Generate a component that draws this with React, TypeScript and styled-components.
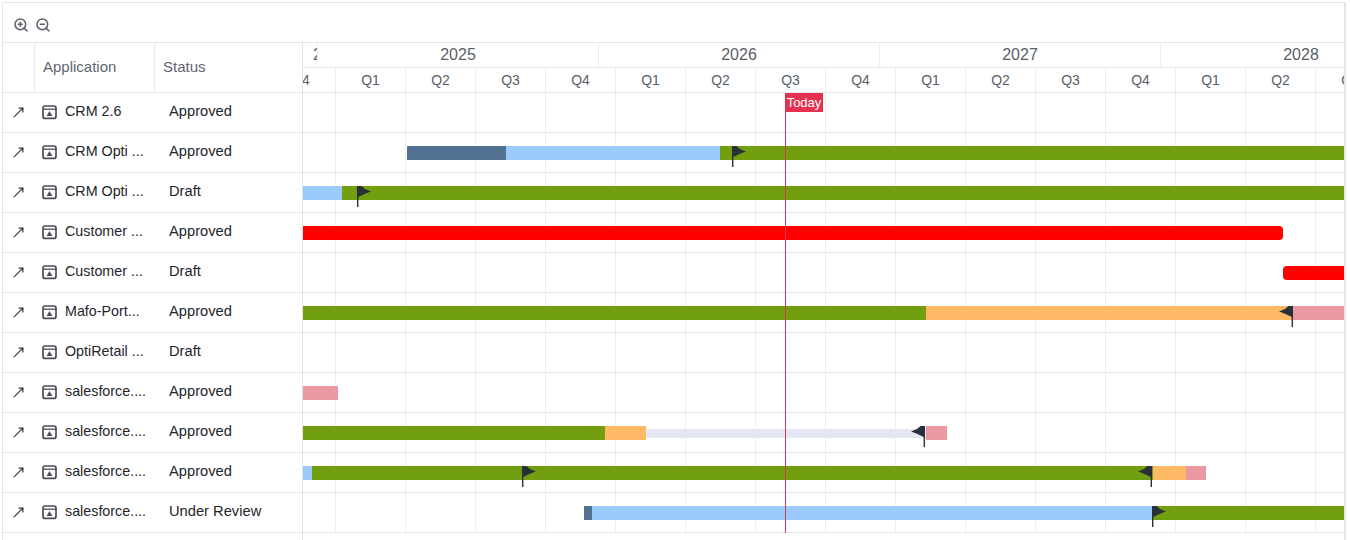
import styled, { createGlobalStyle } from 'styled-components';
import { MoveUpRight, ZoomIn, ZoomOut } from 'lucide-react';

const CHART_LEFT = 303;

const GlobalStyle = createGlobalStyle`
  html, body {
    margin: 0;
    height: 540px;
    overflow: hidden;
    background: #fff;
  }
  * {
    box-sizing: border-box;
  }
`;

const Frame = styled.div`
  width: 1344px;
  height: 538px;
  margin: 2px 0 0 2px;
  border: 1px solid #e3e5e8;
  border-bottom: none;
  border-right-width: 2px;
  font-family: 'Liberation Sans', Arial, sans-serif;
  font-size: 14.7px;
  color: #22262c;
  display: flex;
  flex-direction: column;
`;
const Toolbar = styled.div`
  height: 40px;
  flex: none;
  display: flex;
  align-items: center;
  gap: 6px;
  padding: 4px 0 0 10px;
  border-bottom: 1px solid #e3e5e8;
  color: #5b626b;
`;
const Main = styled.div`
  flex: 1;
  display: flex;
  min-height: 0;
`;
const LeftPane = styled.div`
  width: 300px;
  flex: none;
  border-right: 1px solid #e0e2e5;
`;
const LeftHeader = styled.div`
  height: 50px;
  display: grid;
  grid-template-columns: 31px 120px 1fr;
  border-bottom: 1px solid #e3e5e8;
  color: #5f666f;
  font-size: 15px;
`;
const HeaderCell = styled.div`
  display: flex;
  align-items: center;
  padding: 0 0 3px 8px;
  &:not(:first-child) {
    border-left: 1px solid #e9ebed;
  }
`;
const LeftRow = styled.div`
  height: 40px;
  display: grid;
  grid-template-columns: 31px 120px 1fr;
  align-items: center;
  border-bottom: 1px solid #e3e5e8;
`;
const OpenCell = styled.div`
  display: flex;
  padding-left: 8px;
  color: #333a42;
`;
const NameCell = styled.div`
  display: flex;
  align-items: center;
  gap: 8px;
  padding-left: 8px;
  white-space: nowrap;
  font-size: 14.3px;
`;
const RowText = styled.span`
  position: relative;
  top: -2px;
`;
const StatusCell = styled(RowText)`
  padding-left: 15px;
`;
const Chart = styled.div`
  flex: 1;
  min-width: 0;
  position: relative;
  overflow: hidden;
`;
const HeaderBand = styled.div<{ $shift: number }>`
  height: 25px;
  display: flex;
  margin-left: ${(p) => p.$shift}px;
  border-bottom: 1px solid #e3e5e8;
  color: #5a6068;
`;
const YearCell = styled.div<{ $narrow?: boolean }>`
  flex: none;
  width: ${(p) => (p.$narrow ? 15 : 281)}px;
  overflow: hidden;
  display: flex;
  align-items: center;
  justify-content: ${(p) => (p.$narrow ? 'flex-start' : 'center')};
  padding-left: ${(p) => (p.$narrow ? 10 : 0)}px;
  font-size: 16px;
  border-right: 1px solid #eceef0;
`;
const QuarterCell = styled.div`
  flex: none;
  width: 70px;
  display: flex;
  align-items: center;
  justify-content: center;
  font-size: 14px;
  border-right: 1px solid #eceef0;
`;
const Rows = styled.div`
  position: relative;
  background: repeating-linear-gradient(
    90deg,
    transparent 0 32px,
    #eeeff0 32px 33px,
    transparent 33px 70px
  );
`;
const ChartRow = styled.div`
  height: 40px;
  position: relative;
  border-bottom: 1px solid #e3e5e8;
`;
const Bar = styled.div<{ $from: number; $to: number; $color: string; $thin?: boolean; $round?: 'left' | 'right' }>`
  position: absolute;
  left: ${(p) => p.$from - CHART_LEFT}px;
  width: ${(p) => p.$to - p.$from}px;
  top: ${(p) => (p.$thin ? 16 : 13)}px;
  height: ${(p) => (p.$thin ? 9 : 14)}px;
  background: ${(p) => p.$color};
  border-radius: ${(p) => (p.$round === 'left' ? '4px 0 0 4px' : p.$round === 'right' ? '0 4px 4px 0' : '0')};
`;
const FlagMark = styled.svg<{ $pole: number; $back?: boolean }>`
  position: absolute;
  top: 13px;
  left: ${(p) => p.$pole - CHART_LEFT - (p.$back ? 14 : 0)}px;
  transform: ${(p) => (p.$back ? 'scaleX(-1)' : 'none')};
`;
const TodayLine = styled.div`
  position: absolute;
  top: 50px;
  left: ${785 - CHART_LEFT}px;
  width: 1px;
  height: 440px;
  background: #cf3a55;
`;
const TodayTag = styled.div`
  position: absolute;
  top: 50px;
  left: ${785 - CHART_LEFT}px;
  width: 38px;
  height: 19px;
  background: #e5304f;
  color: #fff;
  font-size: 13px;
  display: flex;
  align-items: center;
  justify-content: center;
`;

const AppIcon = () => (
  <svg width="15" height="15" viewBox="0 0 15 15" fill="none">
    <rect x="1" y="1" width="13" height="12.4" rx="2" stroke="#4a4f57" strokeWidth="1.7" />
    <path d="M1 4.2h13" stroke="#4a4f57" strokeWidth="1.3" />
    <path d="M4.6 11 7.5 6l2.9 5z" fill="#4a4f57" />
  </svg>
);

const Flag = ({ pole, back }: { pole: number; back?: boolean }) => (
  <FlagMark $pole={pole} $back={back} width="15" height="21" viewBox="0 0 15 21">
    <path d="M0 0h1.4v21H0z" fill="#2b3038" />
    <path d="M1 0h3.5L8 3l6 2.6-6 2.2-3.5 1.8L1 11z" fill="#2b3038" />
  </FlagMark>
);

type Segment = { from: number; to: number; color: string; thin?: boolean; round?: 'left' | 'right' };
type Row = { name: string; status: string; bars: Segment[]; flags: { pole: number; back?: boolean }[] };

const DARK = '#527291';
const BLUE = '#9bcbfd';
const GREEN = '#729f0f';
const ORANGE = '#ffb866';
const PINK = '#ea98a2';
const RED = '#ff0000';
const LILAC = '#e4e6f3';
const END = 1345;

const rows: Row[] = [
  { name: 'CRM 2.6', status: 'Approved', bars: [], flags: [] },
  {
    name: 'CRM Opti ...',
    status: 'Approved',
    bars: [
      { from: 407, to: 506, color: DARK },
      { from: 506, to: 720, color: BLUE },
      { from: 720, to: END, color: GREEN },
    ],
    flags: [{ pole: 732 }],
  },
  {
    name: 'CRM Opti ...',
    status: 'Draft',
    bars: [
      { from: 303, to: 342, color: BLUE },
      { from: 342, to: END, color: GREEN },
    ],
    flags: [{ pole: 357 }],
  },
  {
    name: 'Customer ...',
    status: 'Approved',
    bars: [{ from: 303, to: 1283, color: RED, round: 'right' }],
    flags: [],
  },
  {
    name: 'Customer ...',
    status: 'Draft',
    bars: [{ from: 1283, to: END, color: RED, round: 'left' }],
    flags: [],
  },
  {
    name: 'Mafo-Port...',
    status: 'Approved',
    bars: [
      { from: 303, to: 926, color: GREEN },
      { from: 926, to: 1293, color: ORANGE },
      { from: 1293, to: END, color: PINK },
    ],
    flags: [{ pole: 1292, back: true }],
  },
  { name: 'OptiRetail ...', status: 'Draft', bars: [], flags: [] },
  {
    name: 'salesforce....',
    status: 'Approved',
    bars: [{ from: 303, to: 338, color: PINK }],
    flags: [],
  },
  {
    name: 'salesforce....',
    status: 'Approved',
    bars: [
      { from: 303, to: 605, color: GREEN },
      { from: 605, to: 646, color: ORANGE },
      { from: 646, to: 926, color: LILAC, thin: true },
      { from: 926, to: 947, color: PINK },
    ],
    flags: [{ pole: 924, back: true }],
  },
  {
    name: 'salesforce....',
    status: 'Approved',
    bars: [
      { from: 303, to: 312, color: BLUE },
      { from: 312, to: 1153, color: GREEN },
      { from: 1153, to: 1186, color: ORANGE },
      { from: 1186, to: 1206, color: PINK },
    ],
    flags: [{ pole: 522 }, { pole: 1151, back: true }],
  },
  {
    name: 'salesforce....',
    status: 'Under Review',
    bars: [
      { from: 584, to: 592, color: DARK },
      { from: 592, to: 1152, color: BLUE },
      { from: 1152, to: END, color: GREEN },
    ],
    flags: [{ pole: 1152 }],
  },
];

const quarters = ['Q4', 'Q1', 'Q2', 'Q3', 'Q4', 'Q1', 'Q2', 'Q3', 'Q4', 'Q1', 'Q2', 'Q3', 'Q4', 'Q1', 'Q2', 'Q3'];

export default function App() {
  return (
    <>
      <GlobalStyle />
      <Frame>
        <Toolbar>
          <ZoomIn size={16} strokeWidth={2.3} />
          <ZoomOut size={16} strokeWidth={2.3} />
        </Toolbar>
        <Main>
          <LeftPane>
            <LeftHeader>
              <HeaderCell />
              <HeaderCell>Application</HeaderCell>
              <HeaderCell>Status</HeaderCell>
            </LeftHeader>
            {rows.map((row, i) => (
              <LeftRow key={i}>
                <OpenCell>
                  <MoveUpRight size={15} strokeWidth={2} />
                </OpenCell>
                <NameCell>
                  <AppIcon />
                  <RowText>{row.name}</RowText>
                </NameCell>
                <StatusCell>{row.status}</StatusCell>
              </LeftRow>
            ))}
          </LeftPane>
          <Chart>
            <HeaderBand $shift={0}>
              <YearCell $narrow>2024</YearCell>
              <YearCell>2025</YearCell>
              <YearCell>2026</YearCell>
              <YearCell>2027</YearCell>
              <YearCell>2028</YearCell>
            </HeaderBand>
            <HeaderBand $shift={-37}>
              {quarters.map((q, i) => (
                <QuarterCell key={i}>{q}</QuarterCell>
              ))}
            </HeaderBand>
            <Rows>
              {rows.map((row, i) => (
                <ChartRow key={i}>
                  {row.bars.map((b, j) => (
                    <Bar key={j} $from={b.from} $to={b.to} $color={b.color} $thin={b.thin} $round={b.round} />
                  ))}
                  {row.flags.map((f, j) => (
                    <Flag key={j} pole={f.pole} back={f.back} />
                  ))}
                </ChartRow>
              ))}
            </Rows>
            <TodayLine />
            <TodayTag>Today</TodayTag>
          </Chart>
        </Main>
      </Frame>
    </>
  );
}
